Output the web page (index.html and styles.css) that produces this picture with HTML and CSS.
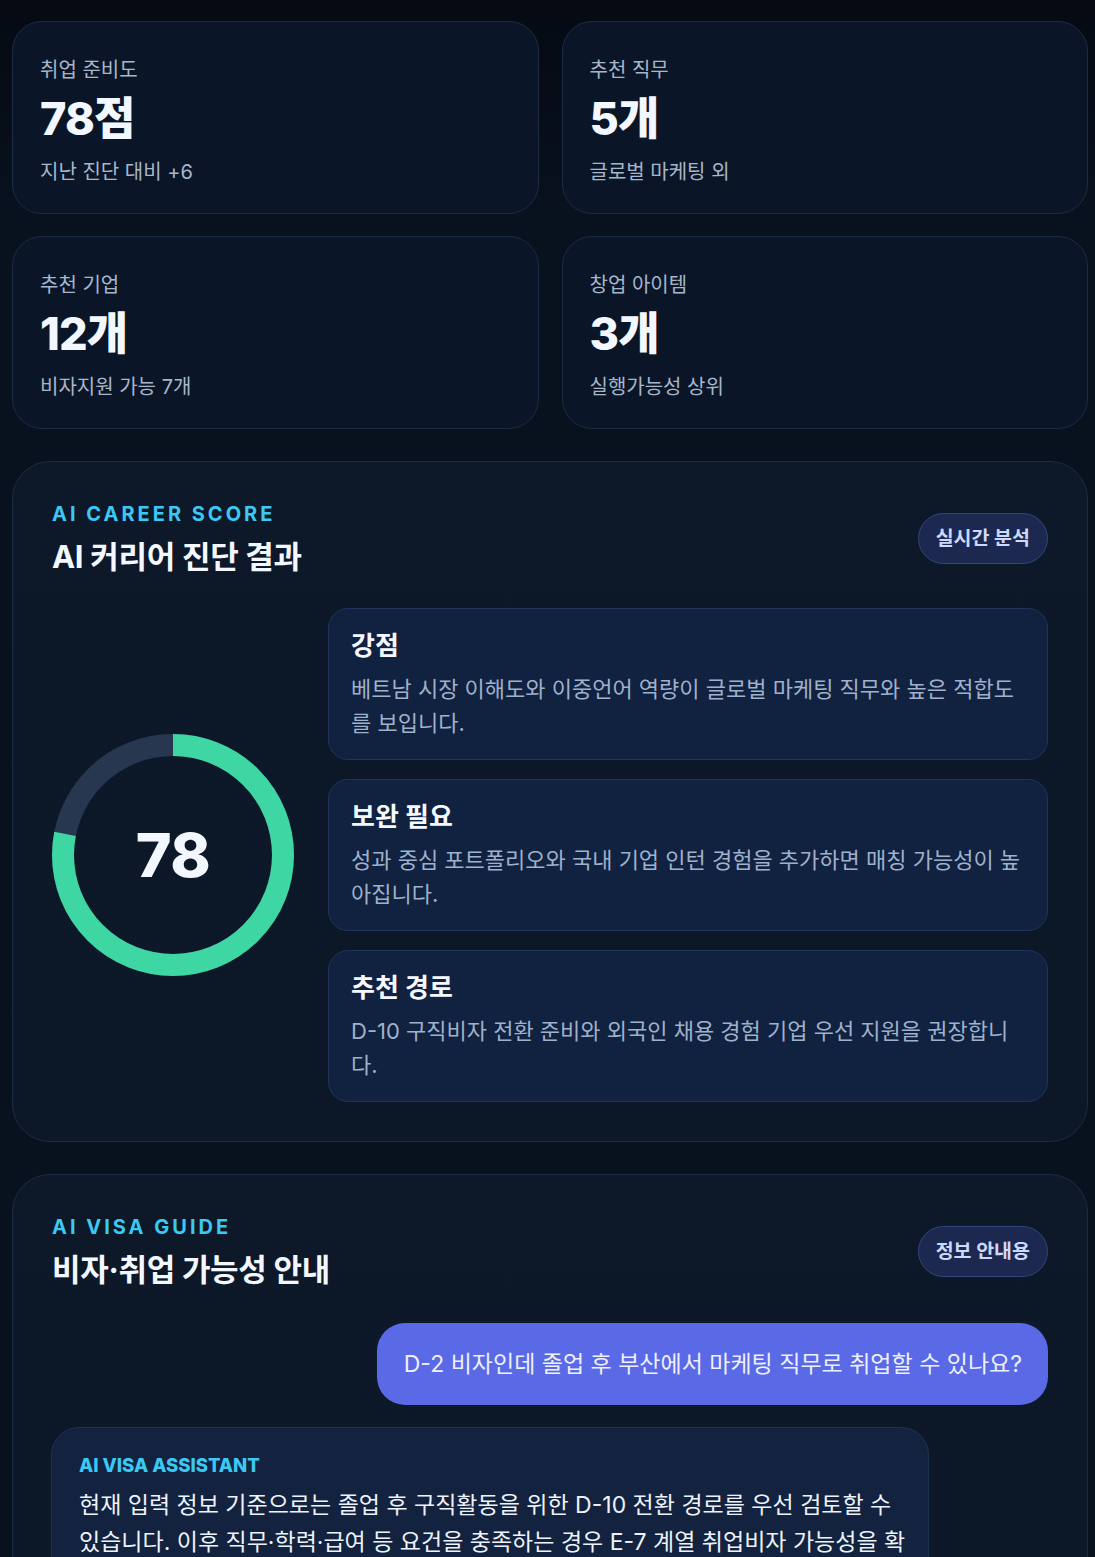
FILE: index.html
```html
<!DOCTYPE html>
<html lang="ko">
<head>
<meta charset="utf-8">
<title>AI 커리어 대시보드</title>
<link rel="stylesheet" href="styles.css">
</head>
<body>
<main class="page">
  <section class="stats">
    <div class="stat">
      <div class="stat-label">취업 준비도</div>
      <div class="stat-value">78점</div>
      <div class="stat-sub">지난 진단 대비 +6</div>
    </div>
    <div class="stat">
      <div class="stat-label">추천 직무</div>
      <div class="stat-value">5개</div>
      <div class="stat-sub">글로벌 마케팅 외</div>
    </div>
    <div class="stat">
      <div class="stat-label">추천 기업</div>
      <div class="stat-value">12개</div>
      <div class="stat-sub">비자지원 가능 7개</div>
    </div>
    <div class="stat">
      <div class="stat-label">창업 아이템</div>
      <div class="stat-value">3개</div>
      <div class="stat-sub">실행가능성 상위</div>
    </div>
  </section>

  <section class="panel">
    <header class="panel-head">
      <div>
        <div class="eyebrow">AI CAREER SCORE</div>
        <h2 class="panel-title">AI 커리어 진단 결과</h2>
      </div>
      <span class="badge">실시간 분석</span>
    </header>
    <div class="score-grid">
      <div class="ring-wrap">
        <div class="ring">
          <svg class="ring-svg" viewBox="0 0 242 242" width="242" height="242">
            <circle cx="121" cy="121" r="110" class="ring-track"/>
            <circle cx="121" cy="121" r="110" class="ring-bar" transform="rotate(-90 121 121)"/>
          </svg>
          <span class="ring-num">78</span>
        </div>
      </div>
      <div class="insights">
        <div class="insight">
          <h3 class="insight-title">강점</h3>
          <p class="insight-text">베트남 시장 이해도와 이중언어 역량이 글로벌 마케팅 직무와 높은 적합도를 보입니다.</p>
        </div>
        <div class="insight">
          <h3 class="insight-title">보완 필요</h3>
          <p class="insight-text">성과 중심 포트폴리오와 국내 기업 인턴 경험을 추가하면 매칭 가능성이 높아집니다.</p>
        </div>
        <div class="insight">
          <h3 class="insight-title">추천 경로</h3>
          <p class="insight-text">D-10 구직비자 전환 준비와 외국인 채용 경험 기업 우선 지원을 권장합니다.</p>
        </div>
      </div>
    </div>
  </section>

  <section class="panel">
    <header class="panel-head">
      <div>
        <div class="eyebrow">AI VISA GUIDE</div>
        <h2 class="panel-title">비자·취업 가능성 안내</h2>
      </div>
      <span class="badge">정보 안내용</span>
    </header>
    <div class="chat">
      <div class="msg-user">D-2 비자인데 졸업 후 부산에서 마케팅 직무로 취업할 수 있나요?</div>
      <div class="msg-ai">
        <div class="msg-ai-label">AI VISA ASSISTANT</div>
        <p class="msg-ai-text">현재 입력 정보 기준으로는 졸업 후 구직활동을 위한 D-10 전환 경로를 우선 검토할 수 있습니다. 이후 직무·학력·급여 등 요건을 충족하는 경우 E-7 계열 취업비자 가능성을 확인할 수 있으며, 최종 판단은 출입국·외국인관서 또는 전문 행정사 상담을 통해 확인하시기 바랍니다.</p>
      </div>
    </div>
  </section>
</main>
</body>
</html>
```

FILE: styles.css
```css
* { box-sizing: border-box; }

html, body {
  margin: 0;
  padding: 0;
}

body {
  background: linear-gradient(180deg, #050a13 0%, #08111e 12%, #08111e 100%);
  color: #eef3fb;
  font-family: "Inter", "Noto Sans CJK KR", "Noto Sans", sans-serif;
  min-height: 1557px;
}

.page {
  padding: 21px 7px 40px 12px;
  display: flex;
  flex-direction: column;
  gap: 32px;
}

/* Stats */
.stats {
  display: grid;
  grid-template-columns: 1fr 1fr;
  column-gap: 23px;
  row-gap: 22px;
}

.stat {
  height: 193px;
  background: #0a1628;
  border: 1px solid #1c2b44;
  border-radius: 30px;
  padding: 34px 27px 0;
  display: flex;
  flex-direction: column;
}

.stat-label {
  font-size: 20px;
  line-height: 28px;
  color: #a8b6ca;
}

.stat-value {
  margin-top: 8px;
  font-size: 45px;
  line-height: 54px;
  font-weight: 800;
  letter-spacing: -0.02em;
  color: #f3f7ff;
}

.stat-sub {
  margin-top: 12px;
  font-size: 20px;
  line-height: 28px;
  color: #a8b6ca;
}

/* Panels */
.panel {
  background: linear-gradient(180deg, #0d1829 0%, #0c1727 100%);
  border: 1px solid #1c2b44;
  border-radius: 38px;
  padding: 38px 39px 39px;
}

.panel-head {
  display: flex;
  justify-content: space-between;
  align-items: center;
}

.eyebrow {
  font-size: 20px;
  line-height: 28px;
  font-weight: 700;
  letter-spacing: 0.15em;
  color: #3cc8f4;
}

.panel-title {
  margin: 9px 0 0;
  font-size: 31px;
  line-height: 40px;
  font-weight: 700;
  color: #f3f7ff;
  letter-spacing: -0.01em;
}

.badge {
  display: inline-block;
  padding: 11px 17px;
  font-size: 19.5px;
  line-height: 27px;
  font-weight: 700;
  color: #cdd8ff;
  background: #1c2850;
  border: 1px solid #34457a;
  border-radius: 999px;
}

/* Score grid */
.score-grid {
  margin-top: 31px;
  display: grid;
  grid-template-columns: 242px 1fr;
  column-gap: 34px;
  align-items: center;
}

.ring-wrap {
  display: flex;
  justify-content: center;
  align-items: center;
}

.ring {
  position: relative;
  width: 242px;
  height: 242px;
}

.ring-svg {
  display: block;
}

.ring-track {
  fill: none;
  stroke: #26374f;
  stroke-width: 22;
}

.ring-bar {
  fill: none;
  stroke: #3ed6a3;
  stroke-width: 22;
  stroke-dasharray: 539.1 691.15;
}

.ring-num {
  position: absolute;
  inset: 0;
  display: flex;
  align-items: center;
  justify-content: center;
  font-size: 61px;
  font-weight: 800;
  color: #f3f7ff;
  letter-spacing: -0.01em;
}

.insights {
  display: flex;
  flex-direction: column;
  gap: 19px;
}

.insight {
  background: #112140;
  border: 1px solid #21345a;
  border-radius: 20px;
  padding: 20px 26px 19px 22px;
}

.insight-title {
  margin: 0;
  font-size: 26px;
  line-height: 34px;
  font-weight: 700;
  color: #f5f8ff;
}

.insight-text {
  margin: 9px 0 0;
  font-size: 22px;
  line-height: 34px;
  color: #9fb1cb;
}

/* Chat */
.chat {
  margin-top: 33px;
  display: flex;
  flex-direction: column;
  gap: 22px;
}

.msg-user {
  align-self: flex-end;
  background: #5a69e6;
  color: #eef0ff;
  font-size: 23px;
  line-height: 34px;
  padding: 24px 26px 24px 27px;
  border-radius: 28px;
}

.msg-ai {
  align-self: flex-start;
  width: 878px;
  margin-left: -1px;
  background: #13223e;
  border: 1px solid #1f3152;
  border-radius: 28px;
  padding: 24px 22px 26px 27px;
}

.msg-ai-label {
  font-size: 18.5px;
  line-height: 26px;
  font-weight: 800;
  letter-spacing: 0;
  color: #3cc8f4;
}

.msg-ai-text {
  margin: 9px 0 0;
  font-size: 23px;
  line-height: 37px;
  color: #eef3fb;
}
```
